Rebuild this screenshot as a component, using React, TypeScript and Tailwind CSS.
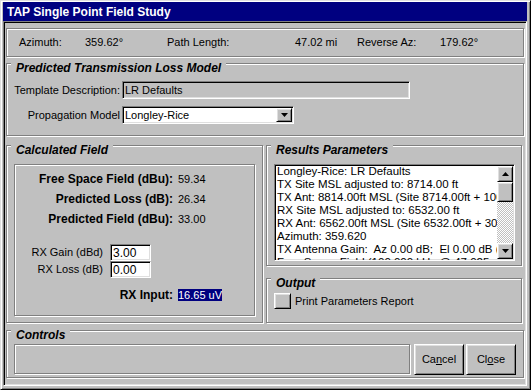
const etched = "border border-[#808080] shadow-[inset_1px_1px_0_#fff,1px_1px_0_#fff]";
const sunken =
  "border border-t-[#808080] border-l-[#808080] border-b-white border-r-white shadow-[inset_1px_1px_0_#000,inset_-1px_-1px_0_#dfdfdf]";
const raised =
  "border border-t-white border-l-white border-b-black border-r-black shadow-[inset_1px_1px_0_#dfdfdf,inset_-1px_-1px_0_#808080]";

const Arrow = ({ up = false }: { up?: boolean }) => (
  <svg width="7" height="4" viewBox="0 0 7 4" className={up ? "rotate-180" : ""}>
    <path d="M0 0h7L3.5 4z" fill="#000" />
  </svg>
);

const Group = ({
  title,
  className,
  children,
}: {
  title: string;
  className: string;
  children?: React.ReactNode;
}) => (
  <div className={`relative ${etched} ${className}`}>
    <span className="absolute left-[4px] top-[-3px] bg-[#c0c0c0] px-[5px] text-[12px] leading-[14px] font-bold italic">
      {title}
    </span>
    {children}
  </div>
);

const results = [
  "Longley-Rice: LR Defaults",
  "TX Site MSL adjusted to: 8714.00 ft",
  "TX Ant: 8814.00ft MSL (Site 8714.00ft + 100.00ft AGL)",
  "RX Site MSL adjusted to: 6532.00 ft",
  "RX Ant: 6562.00ft MSL (Site 6532.00ft + 30.00ft AGL)",
  "Azimuth: 359.620",
  "TX Antenna Gain:  Az 0.00 dB;  El 0.00 dB (angle)",
  "Free Space Field (100.000 kHz @ 47.025 mi)",
];

export default function App() {
  return (
    <div className="w-[531px] h-[390px] bg-[#c0c0c0] font-['Liberation_Sans',Arial,sans-serif] text-[11px] text-black border border-t-[#dfdfdf] border-l-[#dfdfdf] border-b-black border-r-black shadow-[inset_1px_1px_0_#fff,inset_-1px_-1px_0_#808080] pt-[1px] pl-[2px] pr-[3px] pb-[3px] flex flex-col">
      <div className="h-[19px] bg-[#000080] text-white font-bold text-[12px] pl-[4px] flex items-center shrink-0">
        TAP Single Point Field Study
      </div>

      <div className={`flex-1 ${sunken} px-[2px] flex flex-col`}>
        {/* header bevel */}
        <div className={`mt-[6px] h-[29px] ${etched} pl-[12px] flex items-center`}>
          <span className="w-[66px]">Azimuth:</span>
          <span className="w-[82px]">359.62°</span>
          <span className="w-[128px]">Path Length:</span>
          <span className="w-[62px]">47.02 mi</span>
          <span className="w-[83px]">Reverse Az:</span>
          <span>179.62°</span>
        </div>

        <Group title="Predicted Transmission Loss Model" className="mt-[6px] h-[73px] pt-[17px]">
          <div className="flex items-center h-[18px]">
            <span className="w-[115px] pr-[2px] text-right">Template Description:</span>
            <div className={`w-[288px] h-[18px] ${sunken} px-[2px] flex items-center`}>LR Defaults</div>
          </div>
          <div className="flex items-center h-[18px] mt-[7px]">
            <span className="w-[115px] pr-[2px] text-right">Propagation Model</span>
            <div className={`w-[172px] h-[18px] ${sunken} bg-white pl-[2px] flex items-center`}>
              <span>Longley-Rice</span>
              <div className={`ml-auto mr-[1px] w-[16px] h-[14px] ${raised} bg-[#c0c0c0] flex items-center justify-center`}>
                <Arrow />
              </div>
            </div>
          </div>
        </Group>

        <div className="mt-[9px] h-[178px] flex gap-[3px]">
          <Group title="Calculated Field" className="w-[257px] pt-[18px] px-[7px] pb-[6px] flex flex-col">
            <div className={`flex-1 ${etched} pt-[4px]`}>
              {[
                ["Free Space Field (dBu):", "59.34"],
                ["Predicted Loss (dB):", "26.34"],
                ["Predicted Field (dBu):", "33.00"],
              ].map(([k, v]) => (
                <div key={k} className="h-[20px] flex items-center">
                  <span className="w-[158px] text-right font-bold text-[12px]">{k}</span>
                  <span className="ml-[5px]">{v}</span>
                </div>
              ))}
              <div className="mt-[15px]">
                {[
                  ["RX Gain (dBd)", "3.00"],
                  ["RX Loss (dB)", "0.00"],
                ].map(([k, v]) => (
                  <div key={k} className="h-[17px] flex items-center">
                    <span className="w-[88px] text-right">{k}</span>
                    <div className={`ml-[7px] w-[41px] h-[17px] ${sunken} bg-white pl-[2px] flex items-center text-[12px]`}>
                      {v}
                    </div>
                  </div>
                ))}
              </div>
              <div className="mt-[10px] h-[14px] flex items-center">
                <span className="w-[158px] text-right font-bold text-[12px]">RX Input:</span>
                <span className="ml-[5px] h-[12px] leading-[12px] bg-[#000080] text-white">16.65 uV</span>
              </div>
            </div>
          </Group>

          <div className="w-[256px] flex flex-col">
            <Group title="Results Parameters" className="h-[121px] pt-[18px] pl-[7px] pr-[6px] pb-[4px] flex flex-col">
              <div className={`flex-1 ${sunken} bg-white flex overflow-hidden`}>
                <div className="flex-1 pl-[2px] text-[11.5px] leading-[13px] overflow-hidden whitespace-pre">
                  {results.map((r) => (
                    <div key={r}>{r}</div>
                  ))}
                </div>
                <div className="w-[16px] my-[1px] mr-[1px] flex flex-col">
                  <div className={`h-[16px] ${raised} bg-[#c0c0c0] flex items-center justify-center`}>
                    <Arrow up />
                  </div>
                  <div className={`h-[20px] ${raised} bg-[#c0c0c0]`} />
                  <div className="flex-1 bg-[repeating-conic-gradient(#fff_0%_25%,#c0c0c0_0%_50%)] bg-[length:2px_2px]" />
                  <div className={`h-[16px] ${raised} bg-[#c0c0c0] flex items-center justify-center`}>
                    <Arrow />
                  </div>
                </div>
              </div>
            </Group>
            <Group title="Output" className="mt-[12px] h-[45px] pt-[14px] pl-[7px]">
              <div className="flex items-center">
                <div className={`w-[17px] h-[16px] ${raised} bg-[#c0c0c0]`} />
                <span className="ml-[4px]">Print Parameters Report</span>
              </div>
            </Group>
          </div>
        </div>

        <Group title="Controls" className="mt-[7px] h-[48px] pt-[13px] pl-[7px] flex items-start">
          <div className={`w-[396px] h-[30px] ${etched}`} />
          <button className={`ml-[4px] w-[50px] h-[31px] ${raised} bg-[#c0c0c0] text-[11px]`}>
            Ca<span className="underline">n</span>cel
          </button>
          <button className={`ml-[2px] w-[50px] h-[31px] ${raised} bg-[#c0c0c0] text-[11px]`}>
            Cl<span className="underline">o</span>se
          </button>
        </Group>
      </div>
    </div>
  );
}
